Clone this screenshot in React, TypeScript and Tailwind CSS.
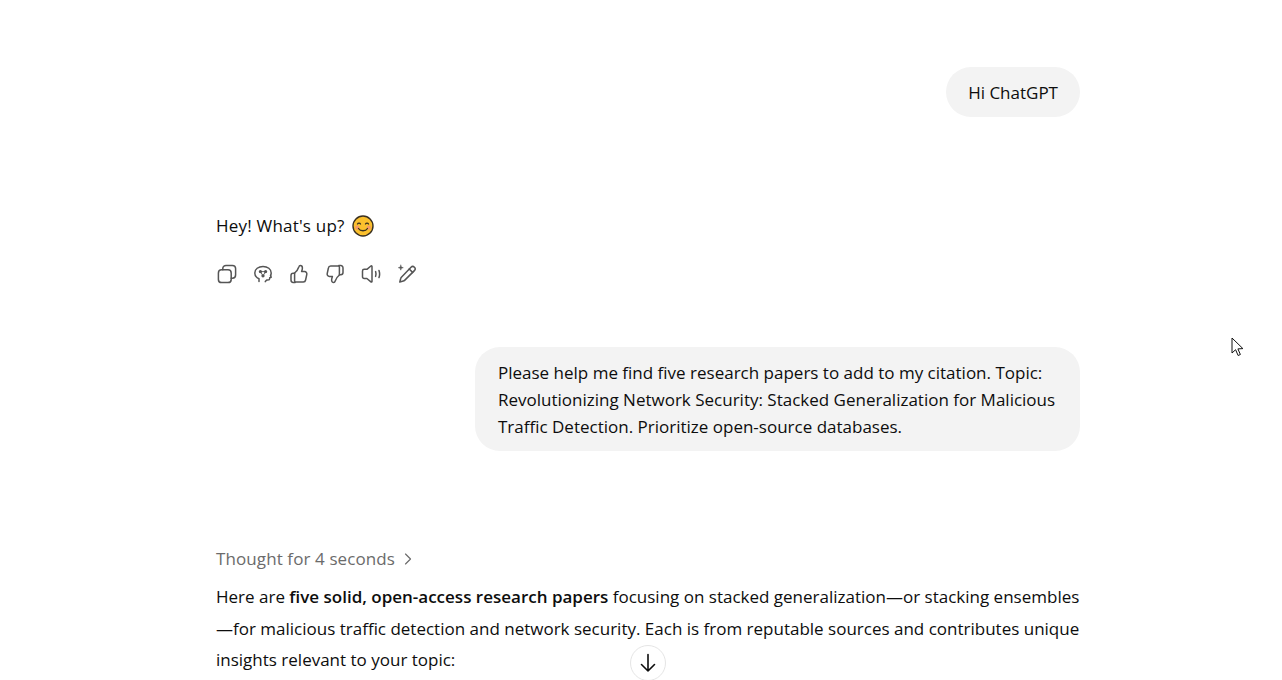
import { ChevronRight } from "lucide-react";

const iconProps = {
  width: 20,
  height: 20,
  viewBox: "0 0 20 20",
  fill: "none",
  stroke: "currentColor",
  strokeWidth: 1.5,
  strokeLinecap: "round" as const,
  strokeLinejoin: "round" as const,
};

function CopyIcon() {
  return (
    <svg {...iconProps}>
      <rect x="1.4" y="5.8" width="12.8" height="12.8" rx="3.2" />
      <path d="M5.8 5.8V4.6a3.2 3.2 0 0 1 3.2-3.2h6.4a3.2 3.2 0 0 1 3.2 3.2v6.4a3.2 3.2 0 0 1-3.2 3.2h-1.2" />
    </svg>
  );
}

function BrainIcon() {
  return (
    <svg {...iconProps}>
      <path d="M6 17.6v-2.8C3.4 13.6 1.800 11.400 1.800 9c0-3.800 3.600-6.600 8.200-6.600s8.200 2.800 8.200 6.600c0 .9-.2 1.700-.6 2.500" />
      <path d="M17.600 11.500l.6 1.700-1.500.6v.6c0 1-.8 1.600-1.800 1.600h-1.200l-1.400 1.600" />
      <circle cx="7.4" cy="7.6" r="0.9" fill="currentColor" />
      <circle cx="12.6" cy="7.6" r="0.9" fill="currentColor" />
      <circle cx="10" cy="11.8" r="0.9" fill="currentColor" />
      <path d="M7.4 7.6h5.2M7.4 7.6L10 11.8M12.6 7.6L10 11.8" strokeWidth="0.9" />
    </svg>
  );
}

function ThumbUpIcon() {
  return (
    <svg {...iconProps}>
      <path d="M5.6 9c1.8-1.4 3.4-3.6 4.2-6 .3-1 .7-1.6 1.5-1.6 1.3 0 2.1 1.1 2.1 2.5 0 1.2-.4 2.6-.8 3.7h3c1.5 0 2.5 1.3 2.2 2.7l-1.2 5.7c-.2 1.1-1.2 1.9-2.3 1.9H6.6c-.6 0-1-.4-1-1V9z" />
      <path d="M5.6 9.2H4.2c-1.3 0-2.2.9-2.2 2.2v4.6c0 1.3.9 2.4 2.2 2.4h2" />
    </svg>
  );
}

function ThumbDownIcon() {
  return (
    <svg {...iconProps}>
      <path d="M14.4 11c-1.8 1.4-3.4 3.6-4.2 6-.3 1-.7 1.6-1.5 1.6-1.3 0-2.1-1.1-2.1-2.5 0-1.2.4-2.6.8-3.7h-3c-1.5 0-2.5-1.3-2.2-2.7l1.2-5.7c.2-1.1 1.2-1.9 2.3-1.9h7.700c.6 0 1 .4 1 1V11z" />
      <path d="M14.4 10.8h1.4c1.3 0 2.2-.9 2.2-2.2V4c0-1.3-.9-2.4-2.2-2.4h-2" />
    </svg>
  );
}

function SpeakerIcon() {
  return (
    <svg {...iconProps}>
      <path d="M11 3v14.400c0 .6-.6.9-1.100.5l-4-3.400H3.200c-1 0-1.700-.8-1.700-1.700V7c0-1 .7-1.700 1.700-1.700h2.700l4-3.300c.5-.4 1.100-.1 1.100.6z" />
      <path d="M14.600 7.600c.5 1.500.5 3.200 0 4.800" />
      <path d="M18 6.400c.8 2.300.8 4.900 0 7.200" />
    </svg>
  );
}

function EditSparkIcon() {
  return (
    <svg {...iconProps}>
      <path d="M14 3.200a2.400 2.400 0 0 1 3.400 3.400L7.600 16.400c-.4.4-.8.6-1.300.7l-3.500.9.9-3.500c.1-.5.3-.9.7-1.300L14 3.200z" />
      <path d="M12.200 5l3.400 3.400" />
      <path d="M3.800 1.200l.6 1.900 1.900.6-1.900.6-.6 1.900-.6-1.900-1.900-.6 1.900-.6.6-1.900z" fill="currentColor" strokeWidth="0.5" />
    </svg>
  );
}

function SmileEmoji() {
  return (
    <svg width="22" height="22" viewBox="0 0 22 22" className="inline-block">
      <circle cx="11" cy="11" r="10" fill="#fbc02d" stroke="#3a3020" strokeWidth="1.4" />
      <circle cx="5.2" cy="12.6" r="2.1" fill="#f48b7a" opacity="0.75" />
      <circle cx="16.8" cy="12.6" r="2.1" fill="#f48b7a" opacity="0.75" />
      <path d="M5.500 9c.6-1.300 2.400-1.300 3 0M13.500 9c.6-1.300 2.400-1.300 3 0" fill="none" stroke="#3a3020" strokeWidth="1.3" strokeLinecap="round" />
      <path d="M6.500 13.500c1.800 3 7.200 3 9 0" fill="none" stroke="#3a3020" strokeWidth="1.3" strokeLinecap="round" />
    </svg>
  );
}

export default function App() {
  return (
    <div className="relative h-[680px] w-[1282px] overflow-hidden bg-white text-[17px] text-[#0d0d0d] font-['Open_Sans','Noto_Sans',sans-serif]">
      <div className="ml-[216px] w-[864px] flex flex-col pt-[67px]">
        <div className="flex justify-end">
          <div className="rounded-[25px] bg-[#f3f3f3] px-[22px] h-[50px] flex items-center leading-[27px]">Hi ChatGPT</div>
        </div>

        <div className="mt-[95px] flex items-center gap-[7px] h-[27px]">
          <span className="tracking-[0.2px]">Hey! What's up?</span>
          <SmileEmoji />
        </div>

        <div className="mt-[25px] flex items-center gap-[16px] pl-[1px] text-[#555555]">
          <CopyIcon />
          <BrainIcon />
          <ThumbUpIcon />
          <ThumbDownIcon />
          <SpeakerIcon />
          <EditSparkIcon />
        </div>

        <div className="mt-[63px] flex justify-end">
          <div className="w-[605px] rounded-[25px] bg-[#f3f3f3] pl-[23px] pr-[20px] pt-[12px] pb-[11px] leading-[27px] whitespace-nowrap">
            Please help me find five research papers to add to my citation. Topic:<br />
            Revolutionizing Network Security: Stacked Generalization for Malicious<br />
            Traffic Detection. Prioritize open-source databases.
          </div>
        </div>

        <div className="mt-[94px] flex items-center gap-[3px] text-[#6b6b6b] h-[27px]">
          <span className="tracking-[0.1px]">Thought for 4 seconds</span>
          <ChevronRight size={20} strokeWidth={1.4} />
        </div>

        <p className="mt-[9px] leading-[31.5px] whitespace-nowrap">
          Here are <strong className="font-semibold">five solid, open-access research papers</strong> focusing on stacked generalization—or stacking ensembles<br />
          —for malicious traffic detection and network security. Each is from reputable sources and contributes unique<br />
          insights relevant to your topic:
        </p>
      </div>

      <div className="absolute left-[630px] top-[645px] flex h-[36px] w-[36px] items-center justify-center rounded-full border border-[#e5e5e5] bg-white text-[#0d0d0d]">
        <svg width="18" height="20" viewBox="0 0 18 20" fill="none" stroke="currentColor" strokeWidth="1.6" strokeLinecap="round" strokeLinejoin="round">
          <path d="M9 1.500v16.500M2.500 11.500L9 18l6.500-6.500" />
        </svg>
      </div>

      <svg className="absolute left-[1231px] top-[337px]" width="14" height="21" viewBox="0 0 14 21">
        <path d="M1 1v15l3.600-3.300 2.500 5.800 2.300-1-2.500-5.600 5-.3L1 1z" fill="#fff" stroke="#111" strokeWidth="1" strokeLinejoin="round" />
      </svg>
    </div>
  );
}
